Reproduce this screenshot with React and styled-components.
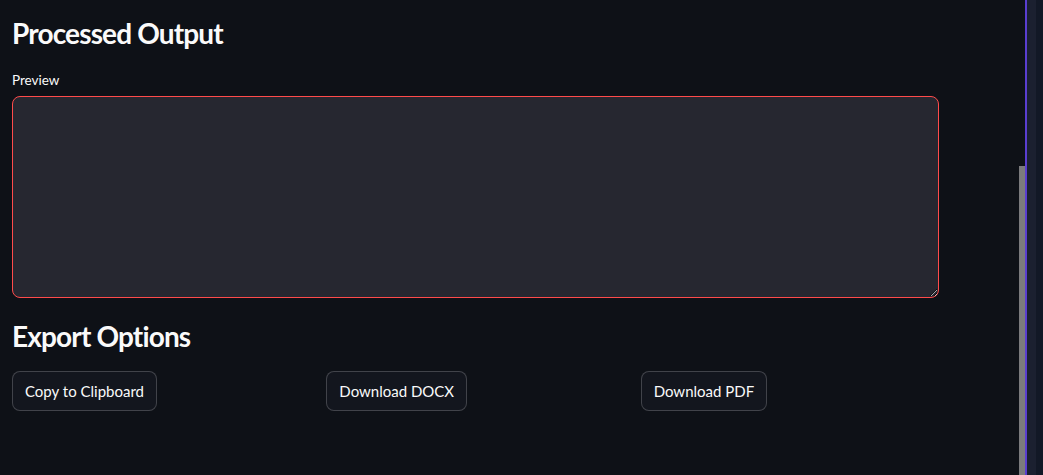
import React from "react";
import styled, { createGlobalStyle } from "styled-components";

const Global = createGlobalStyle`
  html, body { margin: 0; padding: 0; background: #0e1117; }
  body { font-family: "Lato", "Noto Sans", sans-serif; color: #fafafa; }
`;

const Frame = styled.div`
  display: flex;
  width: 1043px;
  height: 475px;
  overflow: hidden;
  background: #0e1117;
`;

const Main = styled.main`
  flex: 1;
  min-width: 0;
  padding: 0 0 0 12px;
  display: flex;
  flex-direction: column;
`;

const Heading = styled.h2`
  margin: ${(p) => p.$mt || 0}px 0 0;
  font-size: 28px;
  font-weight: 700;
  line-height: 1.2;
  color: #fafafa;
  letter-spacing: -0.85px;
`;

const Label = styled.label`
  display: block;
  margin-top: 21px;
  font-size: 13.5px;
  line-height: 16px;
  color: #fafafa;
`;

const TextArea = styled.textarea`
  display: block;
  box-sizing: border-box;
  margin-top: 8px;
  width: 927px;
  height: 202px;
  background: #262730;
  border: 1px solid #ff4b4b;
  border-radius: 8px;
  color: #fafafa;
  font: inherit;
  outline: none;
  resize: vertical;
`;

const ButtonRow = styled.div`
  display: grid;
  grid-template-columns: repeat(3, 1fr);
  gap: 16px;
  width: 927px;
  margin-top: 18px;
`;

const Button = styled.button`
  justify-self: start;
  box-sizing: border-box;
  height: 40px;
  padding: 0 12px;
  background: #13161e;
  border: 1px solid rgba(250, 250, 250, 0.2);
  border-radius: 8px;
  color: #fafafa;
  font-family: inherit;
  font-size: 15px;
  cursor: pointer;
`;

const Track = styled.div`
  width: 6px;
  flex: none;
  display: flex;
  flex-direction: column;
  background: #0e1117;
`;

const Thumb = styled.div`
  margin-top: 166px;
  flex: 1;
  background: #7b7b7d;
`;

const Accent = styled.div`
  width: 2px;
  flex: none;
  background: #5a3ed0;
`;

const SidePanel = styled.div`
  width: 9px;
  flex: none;
  background: #1b2030;
`;

const Edge = styled.div`
  width: 7px;
  flex: none;
  background: #121826;
`;

export default function App() {
  return (
    <>
      <Global />
      <Frame>
        <Main>
          <Heading $mt={17}>Processed Output</Heading>
          <Label>Preview</Label>
          <TextArea />
          <Heading $mt={22}>Export Options</Heading>
          <ButtonRow>
            <Button>Copy to Clipboard</Button>
            <Button>Download DOCX</Button>
            <Button>Download PDF</Button>
          </ButtonRow>
        </Main>
        <Track>
          <Thumb />
        </Track>
        <Accent />
        <SidePanel />
        <Edge />
      </Frame>
    </>
  );
}
